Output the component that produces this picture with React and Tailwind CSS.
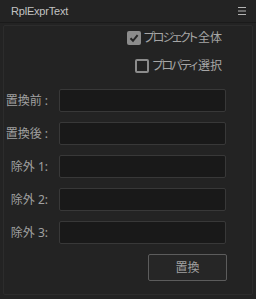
import React, { useState } from 'react';

function Check({ checked, kana, kanji, onToggle }) {
    return (
        <button onClick={onToggle} className="flex items-center gap-[3px] text-[12px] text-[#a6a6a6] leading-none [font-feature-settings:'palt']">
            {checked ? (
                <span className="w-[14px] h-[14px] rounded-[2px] bg-[#8c8c8c] flex items-center justify-center">
                    <svg width="10" height="10" viewBox="0 0 10 10">
                        <path d="M1.5 5.2 L4 7.8 L8.6 2.2" stroke="#262626" strokeWidth="2" fill="none" />
                    </svg>
                </span>
            ) : (
                <span className="w-[14px] h-[14px] rounded-[2px] border-2 border-[#8c8c8c] bg-[#232323]" />
            )}
            <span>
                <span className="tracking-[-2px]">{kana}</span>
                <span className="ml-[2px]">{kanji}</span>
            </span>
        </button>
    );
}

function Row({ label }) {
    return (
        <div className="flex items-center h-[23px]">
            <span className="w-[44px] text-right text-[12px] text-[#a0a0a0] whitespace-nowrap">{label}</span>
            <input className="ml-[11px] w-[167px] h-[23px] rounded-[2px] bg-[#191919] border border-[#383838] outline-none text-[12px] text-[#c8c8c8] px-1" />
        </div>
    );
}

export default function App() {
    const [whole, setWhole] = useState(true);
    const [props, setProps] = useState(false);

    return (
        <div className="w-[256px] h-[299px] bg-[#232323] flex flex-col" style={{ fontFamily: '"Noto Sans", "Noto Sans CJK JP", sans-serif' }}>
            <div className="h-[23px] flex items-center justify-between pl-[11px] pr-[10px] border-b border-[#1a1a1a]">
                <span className="text-[11px] text-[#c2c2c2] tracking-[-0.2px] font-['Liberation_Sans',sans-serif]">RplExprText</span>
                <svg width="8" height="8" viewBox="0 0 8 8">
                    <path d="M0 0.5h8M0 4h8M0 7.5h8" stroke="#b4b4b4" strokeWidth="1" />
                </svg>
            </div>
            <div className="mx-[3px] mt-[2px] mb-[4px] flex-1 border border-[#2c2c2c] rounded-[2px] flex flex-col">
                <div className="flex justify-end pr-[30px] pt-[5px]">
                    <Check checked={whole} kana="プロジェクト" kanji="全体" onToggle={() => setWhole(!whole)} />
                </div>
                <div className="flex justify-end pr-[30px] pt-[14px]">
                    <Check checked={props} kana="プロパティ" kanji="選択" onToggle={() => setProps(!props)} />
                </div>
                <div className="flex flex-col gap-[10px] mt-[16px]">
                    <Row label="置換前 :" />
                    <Row label="置換後 :" />
                    <Row label="除外 1:" />
                    <Row label="除外 2:" />
                    <Row label="除外 3:" />
                </div>
                <div className="flex justify-end pr-[25px] mt-[10px]">
                    <button className="w-[79px] h-[27px] border border-[#5c5c5c] rounded-[2px] bg-[#262626] text-[12px] text-[#a0a0a0]">置換</button>
                </div>
            </div>
        </div>
    );
}
